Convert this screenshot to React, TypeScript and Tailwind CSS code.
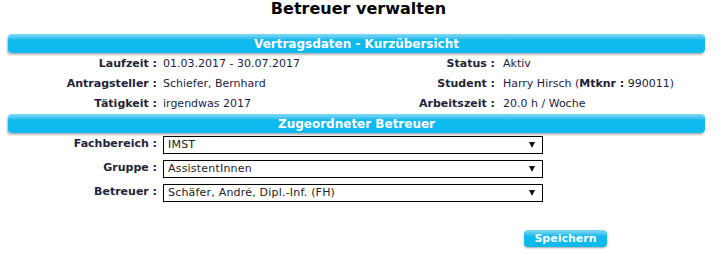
import { ReactNode } from "react";

const font = { fontFamily: '"DejaVu Sans", Verdana, sans-serif' };

function SectionBar({ children }: { children: ReactNode }) {
  return (
    <div className="h-[19px] rounded-[4px] bg-gradient-to-b from-[#7fd9f6] via-[#10bbee] via-30% to-[#0cb8ec] shadow-[-1px_2px_2px_rgba(0,0,0,0.28)] flex items-center justify-center text-white font-bold text-[12px] leading-none">
      {children}
    </div>
  );
}

function Label({ children }: { children: ReactNode }) {
  return <div className="text-right font-bold text-[#232338] pr-[3px] pt-[3px] whitespace-nowrap">{children}</div>;
}

function Value({ children }: { children: ReactNode }) {
  return <div className="text-[#241c46] pt-[3px] whitespace-nowrap">{children}</div>;
}

function SelectBox({ value }: { value: string }) {
  return (
    <div className="w-[380px] h-[18px] border border-black flex items-center justify-between pl-[4px] pr-[7px] text-[#222] bg-white">
      <span className="tracking-[0.2px]">{value}</span>
      <svg width="6" height="6" viewBox="0 0 6 6">
        <path d="M0 0 H6 L3 6 Z" fill="#111" />
      </svg>
    </div>
  );
}

export default function App() {
  return (
    <div className="w-[719px] h-[253px] bg-white px-2 text-[11px]" style={font}>
      <h1 className="text-center font-bold text-[16px] leading-[18px] text-black pr-[2px]">Betreuer verwalten</h1>

      <div className="w-[697px] mt-[16px]">
        <SectionBar>Vertragsdaten - Kurzübersicht</SectionBar>
        <div className="grid grid-cols-[152px_180px_158px_1fr] auto-rows-[20px] items-center">
          <Label>Laufzeit :</Label>
          <Value><span className="pl-[3px]">01.03.2017 - 30.07.2017</span></Value>
          <Label>Status :</Label>
          <Value><span className="pl-[5px]">Aktiv</span></Value>

          <Label>Antragsteller :</Label>
          <Value><span className="pl-[3px]">Schiefer, Bernhard</span></Value>
          <Label>Student :</Label>
          <Value>
            <span className="pl-[5px]">Harry Hirsch (<b className="text-[#232338]">Mtknr :</b> 990011)</span>
          </Value>

          <Label>Tätigkeit :</Label>
          <Value><span className="pl-[3px]">irgendwas 2017</span></Value>
          <Label>Arbeitszeit :</Label>
          <Value><span className="pl-[5px]">20.0 h / Woche</span></Value>
        </div>

        <div className="mt-px">
          <SectionBar>Zugeordneter Betreuer</SectionBar>
        </div>
        <div className="grid grid-cols-[152px_1fr] auto-rows-[24px] items-center">
          <div className="text-right font-bold text-[#232338] pr-[3px] -mt-[2px]">Fachbereich :</div>
          <div className="pl-[3px]"><SelectBox value="IMST" /></div>
          <div className="text-right font-bold text-[#232338] pr-[3px] -mt-[2px]">Gruppe :</div>
          <div className="pl-[3px]"><SelectBox value="AssistentInnen" /></div>
          <div className="text-right font-bold text-[#232338] pr-[3px] -mt-[2px]">Betreuer :</div>
          <div className="pl-[3px]"><SelectBox value="Schäfer, André, Dipl.-Inf. (FH)" /></div>
        </div>

        <div className="w-[599px] flex justify-end mt-[25px]">
          <button className="w-[83px] h-[17px] rounded-[4px] bg-gradient-to-b from-[#7fd9f6] via-[#10bbee] via-35% to-[#0cb8ec] shadow-[0_1px_2px_rgba(0,0,0,0.35)] text-white font-bold text-[11px] leading-none">
            Speichern
          </button>
        </div>
      </div>
    </div>
  );
}
